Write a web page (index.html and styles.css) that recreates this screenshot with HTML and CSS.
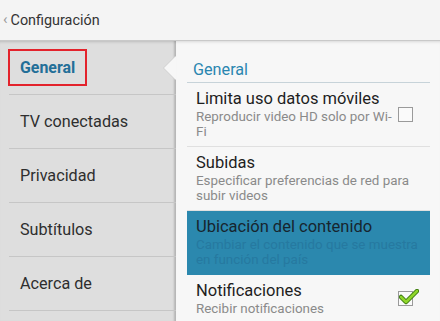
FILE: index.html
```html
<!DOCTYPE html>
<html lang="es">
<head>
    <meta charset="UTF-8">
    <meta name="viewport" content="width=device-width, initial-scale=1.0">
    <title>Configuración</title>
    <link rel="stylesheet" href="styles.css">
</head>
<body>
    <div class="header">
        <span class="back">&#8249;</span>
        <span class="title">Configuración</span>
    </div>

    <div class="main">
        <div class="sidebar">
            <div class="menu-item active"><span class="selected">General</span></div>
            <div class="menu-item">TV conectadas</div>
            <div class="menu-item">Privacidad</div>
            <div class="menu-item">Subtítulos</div>
            <div class="menu-item">Acerca de</div>
        </div>

        <div class="content">
            <div class="section-title">General</div>

            <div class="pref">
                <div class="pref-text narrow">
                    <div class="pref-title">Limita uso datos móviles</div>
                    <div class="pref-summary">Reproducir video HD solo por Wi-Fi</div>
                </div>
                <div class="checkbox"></div>
            </div>

            <div class="pref">
                <div class="pref-text">
                    <div class="pref-title">Subidas</div>
                    <div class="pref-summary">Especificar preferencias de red para subir videos</div>
                </div>
            </div>

            <div class="pref pressed">
                <div class="pref-text">
                    <div class="pref-title">Ubicación del contenido</div>
                    <div class="pref-summary">Cambiar el contenido que se muestra en función del país</div>
                </div>
            </div>

            <div class="pref">
                <div class="pref-text narrow">
                    <div class="pref-title">Notificaciones</div>
                    <div class="pref-summary">Recibir notificaciones</div>
                </div>
                <div class="checkbox checked">
                    <svg width="20" height="16" viewBox="0 0 20 16">
                        <path d="M2 8 L7 13 L18 2" fill="none" stroke="#3c7a10" stroke-width="4.5" stroke-linecap="round" stroke-linejoin="round"/>
                        <path d="M2 8 L7 13 L18 2" fill="none" stroke="#8fd62a" stroke-width="2.5" stroke-linecap="round" stroke-linejoin="round"/>
                    </svg>
                </div>
            </div>
        </div>
    </div>
</body>
</html>
```

FILE: styles.css
```css
body {
    font-family: Roboto, 'Noto Sans', sans-serif;
    margin: 0;
    padding: 0;
    width: 440px;
    height: 321px;
    overflow: hidden;
    background-color: #f7f7f7;
    color: #222;
}

.header {
    height: 40px;
    display: flex;
    align-items: center;
    padding-left: 3px;
    background-color: #f4f4f4;
    border-bottom: 1px solid #c9c9c9;
}

.back {
    color: #9a9a9a;
    font-size: 15px;
    margin-right: 3px;
    margin-top: -2px;
}

.title {
    font-size: 14.4px;
    color: #333;
}

.main {
    display: flex;
    height: 280px;
}

.sidebar {
    width: 176px;
    flex-shrink: 0;
    background-color: #dedede;
    box-shadow: inset -3px 0 2px -1px rgba(0, 0, 0, 0.18), inset 0 3px 3px -2px rgba(0, 0, 0, 0.15);
}

.menu-item {
    position: relative;
    height: 53px;
    margin-left: 9px;
    padding-left: 11px;
    display: flex;
    align-items: center;
    font-size: 16.2px;
    color: #2e2e2e;
    border-bottom: 1px solid #c6c6c6;
}

.selected {
    margin-left: -12px;
    padding: 8px 10px;
    line-height: 17px;
    font-size: 15.9px;
    border: 2px solid #e3232c;
    color: #236f98;
    font-weight: bold;
}

/* notch pointing at the open section */
.menu-item.active::after {
    content: "";
    position: absolute;
    right: 0;
    top: 15px;
    border-top: 12px solid transparent;
    border-bottom: 12px solid transparent;
    border-right: 12px solid #f7f7f7;
    filter: drop-shadow(-1px 0 0 #d0d0d0);
}

.content {
    flex-grow: 1;
    min-width: 0;
    padding: 0 10px 0 11px;
    box-shadow: inset 0 3px 3px -2px rgba(0, 0, 0, 0.12);
}

.section-title {
    padding: 19px 0 3px 6px;
    line-height: 19px;
    font-size: 16.2px;
    color: #2a86b0;
    border-bottom: 1px solid #c7d3d9;
}

.pref {
    display: flex;
    align-items: center;
    padding: 6px 15px 7px 9px;
    border-bottom: 1px solid #e0e0e0;
}

.pref-text {
    flex-grow: 1;
}

.pref-text.narrow {
    flex-grow: 0;
    width: 199px;
}

.pref-title {
    font-size: 16.5px;
    line-height: 20px;
    color: #1e1e1e;
}

.pref-summary {
    font-size: 13.4px;
    line-height: 15px;
    color: #8a8a8a;
}

.pref.pressed {
    padding-right: 7px;
    background-color: #2b88ae;
    border-bottom-color: #2b88ae;
}

.pref.pressed .pref-title {
    color: #17252e;
}

.pref.pressed .pref-summary {
    color: #2679a0;
}

.checkbox {
    position: relative;
    width: 13px;
    height: 13px;
    margin-left: auto;
    margin-right: 2px;
    border: 1px solid #9a9a9a;
    background-color: #fafafa;
}

.checkbox svg {
    position: absolute;
    left: 0;
    top: -3px;
}
```
